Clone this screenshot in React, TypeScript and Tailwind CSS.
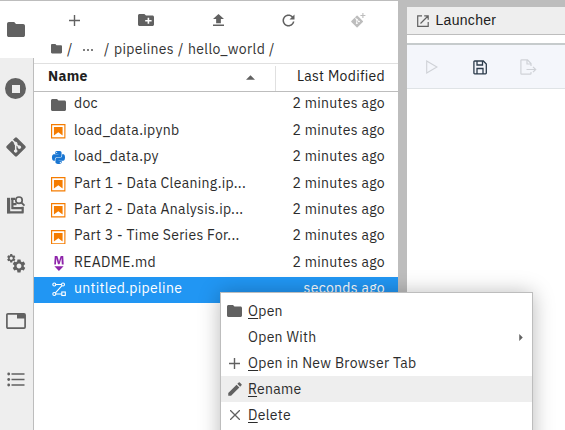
import React from "react";
import { FaPython } from "react-icons/fa";
import { MdSettings, MdEdit } from "react-icons/md";

const FONT = "font-['IBM_Plex_Sans',Roboto,'Liberation_Sans',sans-serif]";

type IconProps = { className?: string };

const Folder = ({ className }: IconProps) => (
  <svg viewBox="2 4 20 16" preserveAspectRatio="none" className={className} fill="currentColor">
    <path d="M10 4H4c-1.1 0-1.99.9-1.99 2L2 18c0 1.1.9 2 2 2h16c1.1 0 2-.9 2-2V8c0-1.1-.9-2-2-2h-8l-2-2z" />
  </svg>
);

const NewFolder = () => (
  <svg viewBox="2 4 20 16" preserveAspectRatio="none" className="h-[12px] w-[16px]" fill="currentColor">
    <path d="M20 6h-8l-2-2H4c-1.11 0-1.99.89-1.99 2L2 18c0 1.11.89 2 2 2h16c1.11 0 2-.89 2-2V8c0-1.11-.89-2-2-2zm-1 8h-3v3h-2v-3h-3v-2h3V9h2v3h3v2z" />
  </svg>
);

const Plus = ({ className }: IconProps) => (
  <svg viewBox="0 0 11 11" className={className} stroke="currentColor" strokeWidth="1.4">
    <path d="M5.5 0v11M0 5.5h11" />
  </svg>
);

const Upload = () => (
  <svg viewBox="5 3 14 17" preserveAspectRatio="none" className="h-[12px] w-[11px]" fill="currentColor">
    <path d="M9 16h6v-6h4l-7-7-7 7h4zm-4 2h14v2H5z" />
  </svg>
);

const Refresh = () => (
  <svg viewBox="2.5 2.5 13 13" className="h-[13px] w-[13px]" fill="currentColor">
    <path d="M9 13.5c-2.49 0-4.5-2.01-4.5-4.5S6.51 4.5 9 4.5c1.24 0 2.36.52 3.17 1.33L10 8h5V3l-1.76 1.76C12.15 3.68 10.66 3 9 3 5.69 3 3.01 5.69 3.01 9S5.69 15 9 15c2.97 0 5.43-2.16 5.9-5h-1.52c-.46 2-2.24 3.5-4.38 3.5z" />
  </svg>
);

const Git = ({ className, line }: IconProps & { line: string }) => (
  <svg viewBox="0 0 22 22" className={className}>
    <rect x="3.7" y="3.7" width="14.6" height="14.6" rx="1.4" transform="rotate(45 11 11)" fill="currentColor" />
    <g stroke={line} fill={line}>
      <path d="M6.8 3.6l3.4 3.5M10.7 8v7M11 8l3.2 3.1" strokeWidth="1.5" fill="none" />
      <circle cx="10.7" cy="7.5" r="1.3" />
      <circle cx="10.7" cy="15" r="1.3" />
      <circle cx="14.4" cy="11.2" r="1.3" />
    </g>
  </svg>
);

const GitAdd = () => (
  <svg viewBox="0 0 15 16" className="h-[16px] w-[15px] text-[#bdbdbd]">
    <rect x="1.7" y="5" width="8.8" height="8.8" rx=".7" transform="rotate(45 6.1 9.4)" fill="currentColor" />
    <g stroke="white" strokeWidth=".9" fill="white">
      <path d="M3.5 5.2l2.3 2.3v4M5.8 7.5l2.2 2.1" fill="none" />
      <circle cx="5.8" cy="7.4" r=".5" />
      <circle cx="5.8" cy="11.2" r=".5" />
      <circle cx="8" cy="9.5" r=".5" />
    </g>
    <path d="M11.9 1v5M9.4 3.5h5" stroke="currentColor" strokeWidth="1.1" />
  </svg>
);

const Notebook = () => (
  <svg viewBox="1.8 1.8 18.4 18.4" className="h-[14.5px] w-[14.5px]" fill="#f57c00">
    <path d="M18.7 3.3v15.4H3.3V3.3h15.4m1.5-1.5H1.8v18.3h18.3l.1-18.3z" />
    <path d="M16.5 16.5l-5.4-4.3-5.6 4.3v-11h11z" />
  </svg>
);

const Markdown = () => (
  <svg viewBox="4.5 1.3 13 19.7" preserveAspectRatio="none" className="h-[15px] w-[10px]" fill="#8e24aa">
    <path d="M5 14.9h12l-6.1 6zm9.4-6.8c0-1.3-.1-2.9-.1-4.5-.4 1.4-.9 2.9-1.3 4.3l-1.3 4.3h-2L8.5 7.9c-.4-1.3-.7-2.9-1-4.3-.1 1.6-.1 3.2-.2 4.6L7 12.4H4.8l.7-11h3.3L10 5c.4 1.2.7 2.7 1 3.9.3-1.2.7-2.6 1-3.9l1.2-3.7h3.3l.6 11h-2.4l-.3-4.2z" />
  </svg>
);

const Pipeline = () => (
  <svg viewBox="0 0 14 15" className="h-[15px] w-[14px]" fill="none" stroke="white" strokeWidth="1.1">
    <circle cx="2.3" cy="2.5" r="1.5" />
    <circle cx="11" cy="2.5" r="1.5" />
    <circle cx="2.3" cy="12" r="1.5" />
    <rect x="9.8" y="10" width="3.5" height="3.5" />
    <path d="M3.8 2.5h5.7M10 3.7l-6.6 7.2M3.8 12h6" />
  </svg>
);

const Inspector = () => (
  <svg viewBox="0 0 20 20" className="h-[20px] w-[20px]" fill="none" stroke="currentColor">
    <path d="M2.6 2.8v15.4" strokeWidth="3.2" />
    <path d="M6.4 2.8v11.2M5 3.8h4M6 9.2h4.5M5.5 13.2h11.3" strokeWidth="2.2" />
    <path d="M1 17.4h16.5M16.7 11.8v6" strokeWidth="2.2" />
    <circle cx="13" cy="5.2" r="3.2" strokeWidth="1.7" />
    <path d="M15.3 7.5l3.2 3.2" strokeWidth="1.8" />
  </svg>
);

const Gears = () => (
  <span className="flex h-[20px] w-[21px] items-start">
    <MdSettings className="-mr-[6px] size-[10.5px] shrink-0" />
    <MdSettings className="mt-[5px] size-[16px] shrink-0" />
  </span>
);

const TabIcon = () => (
  <svg viewBox="0 0 20 16" className="h-[16px] w-[20px]">
    <rect x=".9" y=".9" width="18.2" height="14.2" rx="1" fill="none" stroke="currentColor" strokeWidth="1.7" />
    <path d="M11 1h8v4.5h-8z" fill="currentColor" />
  </svg>
);

const ListIcon = () => (
  <svg viewBox="0 0 18 15" className="h-[15px] w-[18px]" stroke="currentColor" fill="currentColor">
    <path d="M4.5 2H17.5M4.5 7.5H17.5M4.5 13H17.5" strokeWidth="1.7" />
    <g stroke="none">
      <circle cx="1.7" cy="2" r="1.4" />
      <circle cx="1.7" cy="7.5" r="1.4" />
      <circle cx="1.7" cy="13" r="1.4" />
    </g>
  </svg>
);

const Stop = () => (
  <span className="flex size-[21px] items-center justify-center rounded-full bg-[#616161]">
    <span className="size-[8px] bg-[#eeeeee]" />
  </span>
);

type Row = { name: string; icon: React.ReactNode; time: string; selected?: boolean };

const rows: Row[] = [
  { name: "doc", icon: <Folder className="h-[12px] w-[15px] text-[#616161]" />, time: "2 minutes ago" },
  { name: "load_data.ipynb", icon: <Notebook />, time: "2 minutes ago" },
  { name: "load_data.py", icon: <FaPython className="size-[15px] text-[#1976d2]" />, time: "2 minutes ago" },
  { name: "Part 1 - Data Cleaning.ip...", icon: <Notebook />, time: "2 minutes ago" },
  { name: "Part 2 - Data Analysis.ip...", icon: <Notebook />, time: "2 minutes ago" },
  { name: "Part 3 - Time Series For...", icon: <Notebook />, time: "2 minutes ago" },
  { name: "README.md", icon: <Markdown />, time: "2 minutes ago" },
  { name: "untitled.pipeline", icon: <Pipeline />, time: "seconds ago", selected: true },
];

function Sidebar() {
  return (
    <nav className="flex w-[34px] shrink-0 flex-col border-r border-[#bdbdbd] bg-[#eeeeee] text-[#616161]">
      <div className="-mr-px flex h-[57px] items-center bg-white pl-[7px]">
        <Folder className="h-[15px] w-[18px]" />
      </div>
      <div className="flex h-[61px] items-center pl-[5px]"><Stop /></div>
      <div className="flex h-[57px] items-center pb-[2px] pl-[5px]"><Git line="#eeeeee" className="size-[22px]" /></div>
      <div className="flex h-[58px] items-center pl-[6px]"><Inspector /></div>
      <div className="flex h-[58px] items-center pl-[6px]"><Gears /></div>
      <div className="flex h-[58px] items-center pl-[6px]"><TabIcon /></div>
      <div className="flex h-[58px] items-center pl-[7px]"><ListIcon /></div>
    </nav>
  );
}

function FileBrowser() {
  return (
    <section className="flex w-[364px] shrink-0 flex-col bg-white">
      <div className="flex h-[38px] shrink-0 items-center pr-[5px] text-[#616161]">
        <div className="flex flex-1 justify-center pl-[6px]"><Plus className="size-[11px]" /></div>
        <div className="flex flex-1 justify-center pl-[2px]"><NewFolder /></div>
        <div className="flex flex-1 justify-center pl-[3px]"><Upload /></div>
        <div className="flex flex-1 justify-center pl-px"><Refresh /></div>
        <div className="flex flex-1 justify-center"><GitAdd /></div>
      </div>
      <div className="flex h-[24px] shrink-0 items-center pb-[4px] pl-[17px] text-[14px] text-[#333]">
        <Folder className="h-[9.5px] w-[11px] text-[#616161]" />
        <span className="ml-[5px] w-[16px]">/</span>
        <span className="mt-px flex w-[21px] gap-[2px]">
          <i className="size-[2px] rounded-full bg-[#555]" />
          <i className="size-[2px] rounded-full bg-[#555]" />
          <i className="size-[2px] rounded-full bg-[#555]" />
        </span>
        <span className="w-[10px]">/</span>
        <span className="w-[64px] tracking-[0.3px]">pipelines</span>
        <span className="w-[10px]">/</span>
        <span className="w-[81px] tracking-[0.35px]">hello_world</span>
        <span>/</span>
      </div>
      <div className="flex h-[29px] shrink-0 items-center border-t border-b border-t-[#e0e0e0] border-b-[#bdbdbd] text-[14px] text-[#212121]">
        <span className="flex-1 pb-[2px] pl-[14px] font-bold tracking-[0.3px]">Name</span>
        <svg viewBox="0 0 10 5" className="mr-[20px] h-[5px] w-[9px]" fill="#616161"><path d="M0 5l5-5 5 5z" /></svg>
        <span className="mt-[2px] flex h-[25px] w-[123px] items-center justify-end border-l border-[#e0e0e0] pr-[13px] pb-[4px] tracking-[0.3px]">Last Modified</span>
      </div>
      <ul>
        {rows.map((r) => (
          <li key={r.name} className={`flex h-[26.4px] items-center pr-[13px] pb-[2.6px] pl-[17px] text-[14px] ${r.selected ? "bg-[#2196f3] text-white" : "text-[#2c2c2c]"}`}>
            <span className="mt-[2.4px] flex w-[15px] justify-center">{r.icon}</span>
            <span className="ml-[8px] flex-1 tracking-[0.3px] whitespace-pre">{r.name}</span>
            <span className="tracking-[0.3px]">{r.time}</span>
          </li>
        ))}
      </ul>
    </section>
  );
}

function MainArea() {
  return (
    <main className="flex min-w-0 flex-1 flex-col bg-white">
      <div className="h-[6px] bg-[#bdbdbd]" />
      <div className="flex h-[28px] items-center border-b border-[#bdbdbd] bg-[#eeeeee] pl-[10px]">
        <svg viewBox="0 0 12 12" className="size-[12px]" fill="none" stroke="#616161" strokeWidth="1.2">
          <path d="M5 .8H.7v10.5h10.5V7M7.2.8h4v4M11 1L3.5 8.5" />
        </svg>
        <span className="ml-[6.5px] font-['Liberation_Sans',Arial,sans-serif] text-[14px] tracking-[0.3px] text-[#212121]">Launcher</span>
      </div>
      <div className="h-[8px]" />
      <div className="flex h-[46px] items-center border-t-2 border-b border-t-[#c6cbcc] border-b-[#dfe3e6] bg-[#f4f6fb] pt-px pl-[19px]">
        <svg viewBox="0 0 12 14" className="h-[14px] w-[12px]" fill="none" stroke="#cfd2d7" strokeWidth="1.1"><path d="M.7 1l10.2 6L.7 13z" /></svg>
        <svg viewBox="0 0 14 15" className="ml-[35px] h-[15px] w-[14px]" fill="none" stroke="#2b3b4b" strokeWidth="1.3">
          <path d="M1.7 1h8.6l3 3v9c0 .5-.3.8-.8.8H1.7c-.5 0-.8-.3-.8-.8V1.8c0-.5.3-.8.8-.8zM4 1v4h5.5V1M4 14V8.5h6V14" />
        </svg>
        <svg viewBox="0 0 17 16" className="ml-[33px] h-[16px] w-[17px]" fill="none" stroke="#cfd2d7" strokeWidth="1.2">
          <path d="M11 7V4.5L7.5.8H1.7c-.5 0-.8.3-.8.8v12.8c0 .5.3.8.8.8h8.5c.5 0 .8-.3.8-.8V13M7 .8V5h4M6.5 10.5h9M13 7.8l2.7 2.7-2.7 2.7" />
        </svg>
      </div>
    </main>
  );
}

function MenuItem({ icon, mnemonic, children, active, arrow }: { icon?: React.ReactNode; mnemonic?: string; children: string; active?: boolean; arrow?: boolean }) {
  return (
    <div className={`flex h-[26px] items-center pr-[9px] ${active ? "bg-[#eeeeee]" : ""}`}>
      <span className="flex w-[27px] justify-center text-[#616161]">{icon}</span>
      <span className="flex-1 tracking-[0.3px] whitespace-pre">
        {mnemonic && <span className="underline underline-offset-2">{mnemonic}</span>}
        {children}
      </span>
      {arrow && <svg viewBox="0 0 4 8" className="h-[7px] w-[4px]" fill="#616161"><path d="M0 0l4 4-4 4z" /></svg>}
    </div>
  );
}

function ContextMenu() {
  return (
    <div className="absolute top-[291px] left-[220px] h-[160px] w-[313px] border border-[#bdbdbd] bg-white pt-[5px] text-[14px] text-[#2c2c2c] shadow-[0_1px_20px_rgba(0,0,0,0.28)]">
      <MenuItem icon={<Folder className="h-[12px] w-[15px]" />} mnemonic="O">pen</MenuItem>
      <MenuItem arrow>Open With</MenuItem>
      <MenuItem icon={<Plus className="size-[11px]" />} mnemonic="O">pen in New Browser Tab</MenuItem>
      <MenuItem active icon={<MdEdit className="size-[18px]" />} mnemonic="R">ename</MenuItem>
      <MenuItem icon={<svg viewBox="0 0 10 10" className="size-[10px]" stroke="currentColor" strokeWidth="1.3"><path d="M0 0l10 10M10 0L0 10" /></svg>} mnemonic="D">elete</MenuItem>
    </div>
  );
}

export default function App() {
  return (
    <div className={`relative flex h-[430px] w-[565px] overflow-hidden border-t border-[#bdbdbd] bg-white ${FONT}`}>
      <Sidebar />
      <FileBrowser />
      <div className="w-[9px] shrink-0 bg-[#bdbdbd]" />
      <MainArea />
      <ContextMenu />
    </div>
  );
}
